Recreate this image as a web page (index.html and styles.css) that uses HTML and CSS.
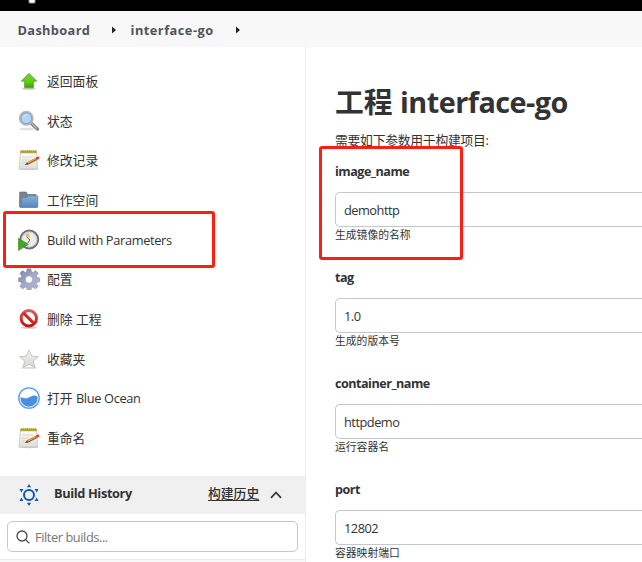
FILE: index.html
```html
<!DOCTYPE html>
<html lang="zh-CN">
<head>
<meta charset="utf-8">
<title>interface-go</title>
<link rel="stylesheet" href="styles.css">
</head>
<body>
<svg class="defs" width="0" height="0" aria-hidden="true">
  <defs>
    <linearGradient id="green" x1="0" y1="0" x2="0" y2="1"><stop offset="0" stop-color="#7fc34d"/><stop offset=".6" stop-color="#5fce0e"/><stop offset="1" stop-color="#3f9a0c"/></linearGradient>
    <linearGradient id="paper" x1="0" y1="0" x2="0" y2="1"><stop offset="0" stop-color="#fff"/><stop offset="1" stop-color="#dcdcd8"/></linearGradient>
    <linearGradient id="folder" x1="0" y1="0" x2="0" y2="1"><stop offset="0" stop-color="#86b0dd"/><stop offset="1" stop-color="#5585bd"/></linearGradient>
    <linearGradient id="red" x1="0" y1="0" x2="0" y2="1"><stop offset="0" stop-color="#dc5a5a"/><stop offset="1" stop-color="#c91313"/></linearGradient>
    <linearGradient id="gear" x1="0" y1="0" x2="1" y2="1"><stop offset="0" stop-color="#777e9d"/><stop offset=".5" stop-color="#a4aac6"/><stop offset="1" stop-color="#b3b8d4"/></linearGradient>
    <linearGradient id="star" x1="0" y1="0" x2="0" y2="1"><stop offset="0" stop-color="#f4f4f3"/><stop offset="1" stop-color="#d5d5d3"/></linearGradient>
    <symbol id="notepad" viewBox="0 0 22 22">
      <ellipse cx="11" cy="20" rx="10" ry="1.2" fill="#ccc"/>
      <path d="M2.500 2.500h16l1 17.500H1z" fill="url(#paper)" stroke="#c4c4bf" stroke-width=".8"/>
      <path d="M2.400 1.500h16.200v2.700H2.300z" fill="#b8ac2e"/>
      <path d="M3.500 1v2.500m2-2.500v2.500m2-2.500v2.500m2-2.500v2.500m2-2.500v2.500m2-2.500v2.500m2-2.500v2.500m2-2.500v2.500" stroke="#938929" stroke-width=".5"/>
      <path d="M4 8h11M4 11h7M4 14h5" stroke="#d0d0cd" stroke-width=".8"/>
      <path d="M9 14.800l9.500-5" stroke="#8e5420" stroke-width="2.500"/>
      <path d="M9 14.400l9.400-5" stroke="#e9a64c" stroke-width="1.400"/>
      <path d="M18.200 9.800l2.800-1.500" stroke="#d94132" stroke-width="2.600"/>
      <path d="M9.200 13.400l1 2-3.500.5z" fill="#59462e"/>
    </symbol>
  </defs>
</svg>
<header class="top"><svg class="logo" width="8" height="4" viewBox="0 0 8 4"><path d="M.5 0h7v2.300l-1.300 1.200H1.800L.5 2.300z" fill="#999"/><path d="M1.500 0h5v2.500h-5z" fill="#fff"/></svg></header>
<nav class="crumbs">
  <a class="c1">Dashboard</a><svg class="arrow" width="4" height="8" viewBox="0 0 4 8"><path d="M0 .5L4 4 0 7.500z" fill="#222"/></svg>
  <a class="c2">interface-go</a><svg class="arrow" width="4" height="8" viewBox="0 0 4 8"><path d="M0 .5L4 4 0 7.500z" fill="#222"/></svg>
</nav>
<div class="page">
  <aside class="side">
    <div class="tasks">
      <a class="task"><svg width="22" height="22" viewBox="0 0 22 22"><ellipse cx="11" cy="18.700" rx="7" ry="1" fill="#ccc"/><path d="M11 3.300l7.800 7.900h-3.400v6.600H6.600v-6.600H3.200z" fill="url(#green)" stroke="#519326" stroke-width=".7" stroke-linejoin="round"/></svg><span>返回面板</span></a>
      <a class="task"><svg width="22" height="22" viewBox="0 0 22 22"><ellipse cx="9" cy="19" rx="8" ry="1.300" fill="#e2e2e2"/><path d="M13.500 13.500l6 5.500" stroke="#858585" stroke-width="3.400" stroke-linecap="round"/><path d="M14 13.700l5 4.700" stroke="#bbb" stroke-width="1.200"/><circle cx="8.300" cy="8.300" r="6.700" fill="#a9c8eb" stroke="#b5b8bb" stroke-width="1.600"/><circle cx="8.300" cy="8.300" r="5.400" fill="#b7d2ef" stroke="#6f9acb" stroke-width=".9"/><path d="M4.700 7.800Q6 4 10 4.300 6.500 6 4.700 7.800" fill="#e0effb"/></svg><span>状态</span></a>
      <a class="task"><svg width="22" height="22"><use href="#notepad"/></svg><span>修改记录</span></a>
      <a class="task"><svg width="22" height="22" viewBox="0 0 22 22"><path d="M1.500 18V4q0-1 1-1h5q1 0 1.400 1l.6 1.500h8.500v12z" fill="#7b828b" stroke="#5d6671" stroke-width=".6"/><path d="M3.700 8.500h5l1.500-1.700H19q.8 0 .8.800v10.200q0 .7-.8.700H2.600z" fill="url(#folder)" stroke="#4f7eb2" stroke-width=".7"/></svg><span>工作空间</span></a>
      <a class="task"><svg width="22" height="22" viewBox="0 0 22 22"><circle cx="11.300" cy="10.500" r="8.900" fill="#ecece8" stroke="#716d82" stroke-width="2"/><circle cx="11.300" cy="10.500" r="7.500" fill="none" stroke="#c2c1c9" stroke-width=".8"/><path d="M6.500 5.800L11 3.700l.8 5.300z" fill="#e3c257"/><path d="M8.500 7.500l3.300 3.500-2 3" fill="none" stroke="#666" stroke-width="1"/><path d="M.3 9.300l10.200 6L.3 21.500z" fill="#46a528" stroke="#39831f" stroke-width=".6"/></svg><span class="latin">Build with Parameters</span></a>
      <a class="task"><svg width="22" height="22" viewBox="0 0 22 22"><path d="M9 .8h4l.5 3.100 1.500.6 2.600-1.900 2.700 2.700-1.900 2.600.6 1.500 2.500.5v3.800l-2.600.5-.6 1.500 1.900 2.500-2.700 2.700-2.500-1.800-1.500.6-.5 2.100H9.200l-.6-2.200-1.500-.6-2.500 1.900-2.700-2.700 1.800-2.500-.6-1.500L.5 13.600V9.900l2.700-.5.600-1.500L1.900 5.300l2.700-2.700 2.600 1.900 1.400-.6zM11 7.800a3.700 3.700 0 1 0 0 7.400 3.700 3.700 0 0 0 0-7.400z" fill="url(#gear)" fill-rule="evenodd" stroke="#7d829c" stroke-width=".5"/></svg><span>配置</span></a>
      <a class="task"><svg width="22" height="22" viewBox="0 0 22 22"><ellipse cx="11" cy="19.700" rx="8" ry="1" fill="#ccc"/><circle cx="10.800" cy="10.300" r="7.700" fill="#fff" stroke="url(#red)" stroke-width="3"/><path d="M5.500 5l10.600 10.600" stroke="#cf2828" stroke-width="3"/></svg><span>删除 工程</span></a>
      <a class="task"><svg width="22" height="22" viewBox="0 0 22 22"><ellipse cx="11" cy="20" rx="8" ry="1" fill="#ddd"/><path d="M11 2l2.700 6 6.600.7-4.900 4.500 1.600 6.400L11 16.500 5 19.600l1.600-6.400L1.700 8.700 8.300 8z" fill="url(#star)" stroke="#b9b9b7" stroke-width=".8" stroke-linejoin="round"/></svg><span>收藏夹</span></a>
      <a class="task"><svg width="22" height="22" viewBox="0 0 22 22"><circle cx="11" cy="11" r="10.200" fill="#fff" stroke="#5b9be6" stroke-width="1.300"/><path d="M2.300 10.500C4.500 10 6.500 11.800 9.500 11s4.500-2.700 7-2.400c1.500.2 2.600.9 3.100 1.400A8.700 8.700 0 0 1 11 19.700 8.700 8.700 0 0 1 2.300 10.500z" fill="#4a90e2"/></svg><span>打开 <span class="latin">Blue Ocean</span></span></a>
      <a class="task"><svg width="22" height="22"><use href="#notepad"/></svg><span>重命名</span></a>
    </div>
    <div class="history">
      <svg width="22" height="22" viewBox="0 0 22 22" fill="#0b56c4"><circle cx="11" cy="11" r="5" fill="none" stroke="#0b56c4" stroke-width="2"/><path d="M11 0l2.100 3.300H8.900zM11 22l2.100-3.300H8.900zM1.500 5h3.900L3.300 8.400zM20.500 5h-3.900l2.100 3.400zM1.500 17h3.900l-2.100-3.400zM20.500 17h-3.900l2.100-3.400z"/></svg>
      <b class="bh">Build History</b>
      <a class="trend">构建历史</a>
      <svg class="chev" width="12" height="8" viewBox="0 0 12 8"><path d="M1 6.800L6 1.500l5 5.300" fill="none" stroke="#333" stroke-width="1.700"/></svg>
    </div>
    <div class="filter"><svg width="14" height="14" viewBox="0 0 14 14" fill="none" stroke="#4d4d4d" stroke-width="1.300"><circle cx="6" cy="6" r="5"/><path d="M9.600 9.600l3.700 3.700"/></svg><span class="ph">Filter builds...</span></div>
    <div class="foot"></div>
  </aside>
  <main class="main">
    <h1>工程 <span class="name">interface-go</span></h1>
    <p class="intro">需要如下参数用于构建项目:</p>
    <section class="field"><label>image_name</label><div class="input">demohttp</div><p class="hint">生成镜像的名称</p></section>
    <section class="field"><label>tag</label><div class="input">1.0</div><p class="hint">生成的版本号</p></section>
    <section class="field"><label>container_name</label><div class="input">httpdemo</div><p class="hint">运行容器名</p></section>
    <section class="field"><label>port</label><div class="input">12802</div><p class="hint">容器映射端口</p></section>
  </main>
</div>
<div class="mark mark-build"></div>
<div class="mark mark-image"></div>
</body>
</html>
```
FILE: styles.css
```css
* { box-sizing: border-box; }
body {
  margin: 0;
  height: 562px;
  overflow: hidden;
  position: relative;
  background: #fff;
  color: #333;
  font: 12.8px/20px "Open Sans", "Noto Sans CJK SC", sans-serif;
}
h1, p { margin: 0; }
svg { display: block; flex: none; }
.defs { position: absolute; }
.top { height: 11px; background: #000; padding-left: 28px; }
.crumbs {
  height: 36px;
  background: #f8f8f8;
  display: flex;
  align-items: center;
  padding: 2px 0 0 17.5px;
  color: #4d545d;
  font-weight: 700;
  letter-spacing: .35px;
}
.crumbs a { white-space: nowrap; }
.c1 { width: 94px; }
.c2 { width: 105px; letter-spacing: .48px; }
.crumbs .arrow + .c2 { margin-left: 15px; }
.page { display: flex; height: 515px; }
.side {
  width: 306px;
  flex: none;
  border-right: 1px solid #ececec;
  padding-top: 14px;
  display: flex;
  flex-direction: column;
}
.tasks { height: 415px; flex: none; }
.task {
  display: flex;
  align-items: center;
  gap: 7px;
  height: 39.7px;
  padding-left: 18px;
  white-space: nowrap;
}
.latin { letter-spacing: -.34px; }
.history {
  height: 38px;
  flex: none;
  background: #f0f0f0;
  display: flex;
  align-items: center;
  padding-left: 18px;
}
.bh {
  width: 154px;
  margin: 0 0 4px 14px;
  font-weight: 700;
  letter-spacing: -.38px;
  white-space: nowrap;
}
.trend {
  width: 51px;
  margin-bottom: 5px;
  font-weight: 500;
  white-space: nowrap;
  text-decoration: underline;
  text-underline-offset: 2px;
}
.chev { margin-left: 11px; }
.filter {
  height: 31px;
  flex: none;
  margin: 7px;
  border: 1px solid #c0c9d1;
  border-radius: 5px;
  display: flex;
  align-items: center;
  gap: 5px;
  padding-left: 8px;
  color: #757575;
}
.ph { letter-spacing: -.42px; }
.foot { flex: 1; border-top: 1px solid #ececec; background: #f8f8f8; }
.main { flex: 1; padding: 35px 0 0 29px; min-width: 0; }
h1 { font-size: 28.8px; line-height: 40px; font-weight: 700; white-space: nowrap; }
.name { letter-spacing: -.52px; }
.intro { margin-top: 8px; height: 20px; letter-spacing: -.25px; white-space: nowrap; }
.field { height: 106px; padding-top: 12px; }
.field label {
  display: block;
  height: 30px;
  font-size: 12.6px;
  font-weight: 700;
  letter-spacing: -.5px;
}
.input {
  height: 35px;
  border: 1px solid #c0c9d1;
  border-right: 0;
  border-radius: 5px 0 0 5px;
  display: flex;
  align-items: center;
  padding-left: 8px;
  letter-spacing: -.5px;
}
.hint { font-size: 10.8px; line-height: 16px; white-space: nowrap; }
.mark { position: absolute; border: 3px solid #ff1f10; border-radius: 3px; }
.mark-build { left: 3px; top: 211px; width: 212px; height: 57px; }
.mark-image { left: 319px; top: 146px; width: 144px; height: 114px; }
```
